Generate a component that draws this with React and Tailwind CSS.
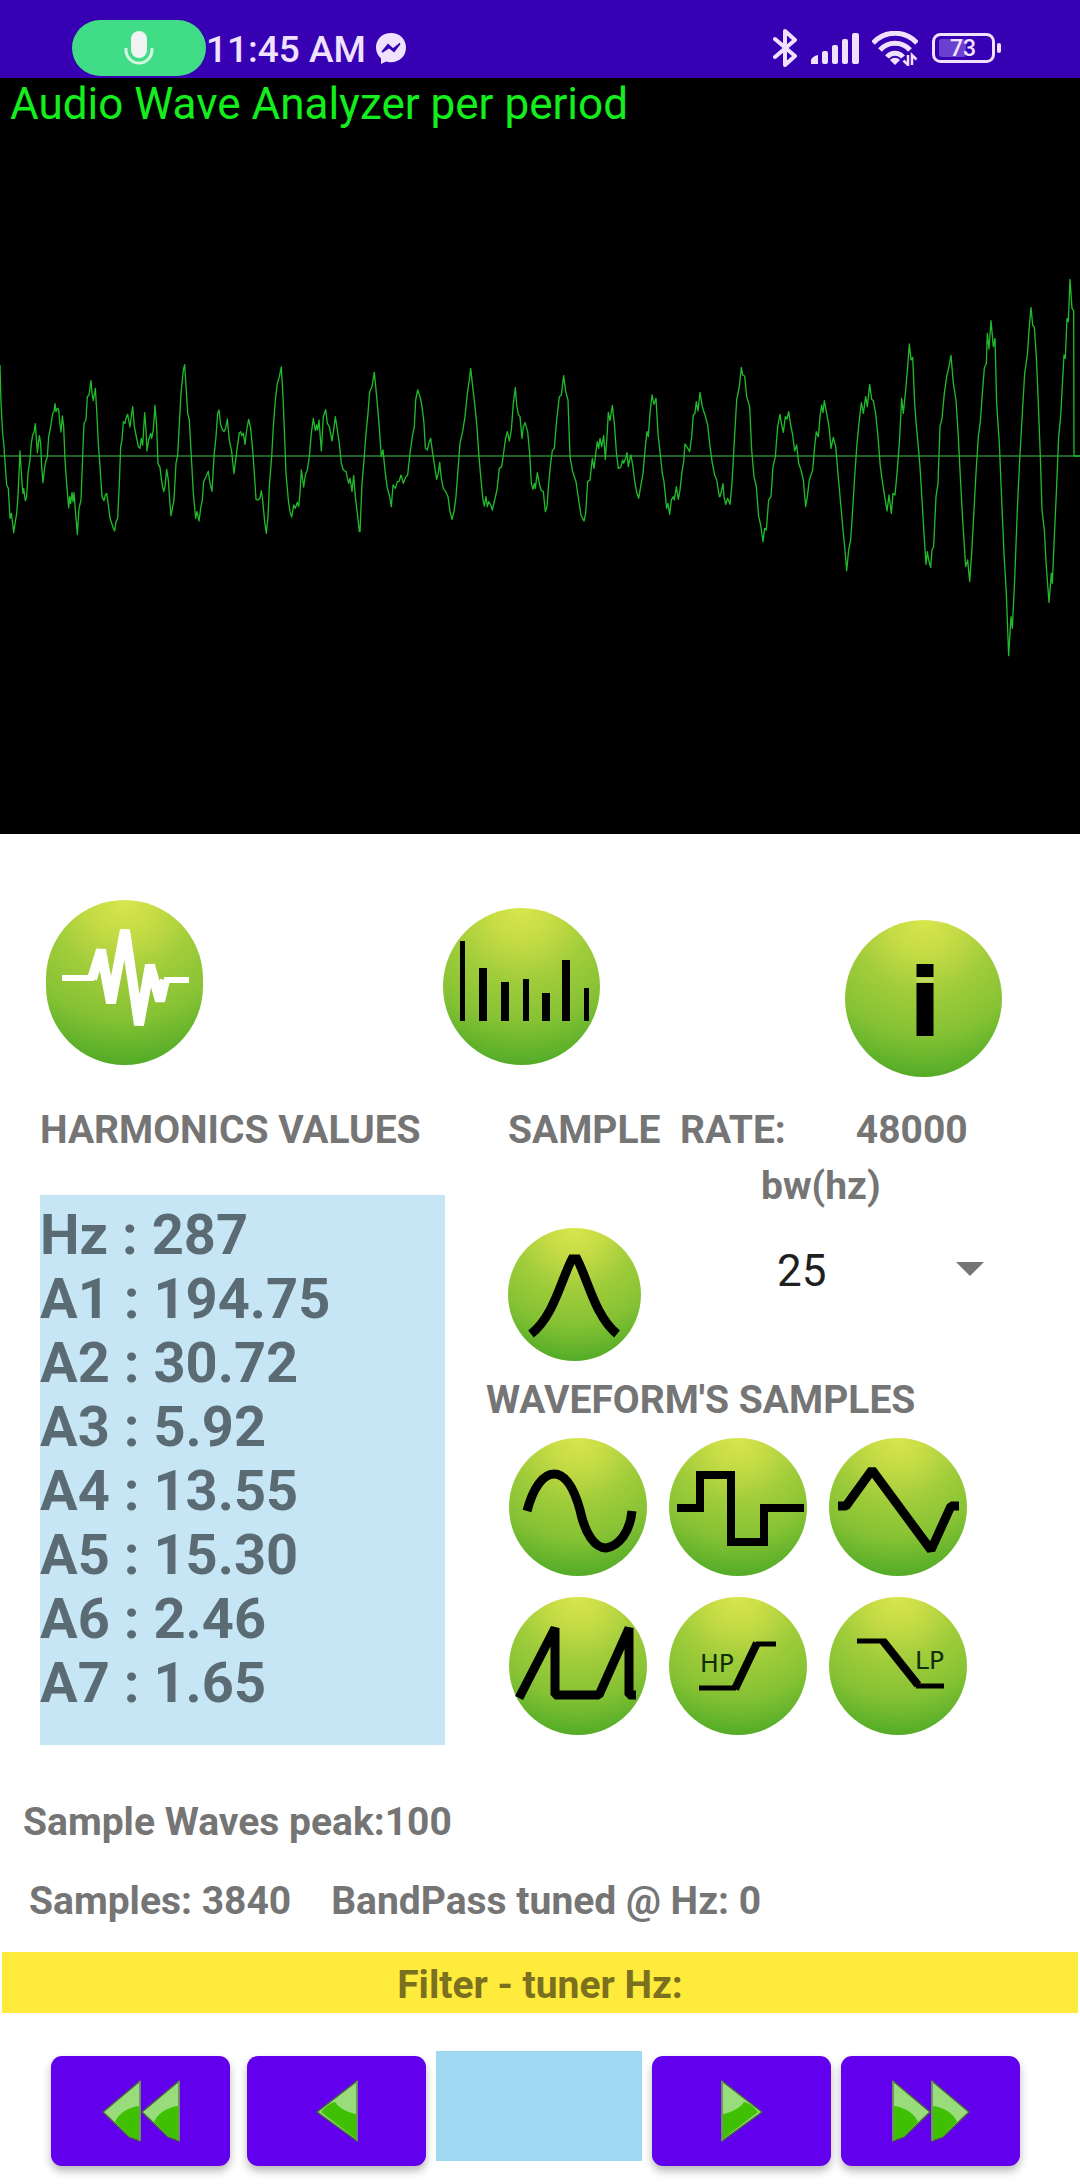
import { useState } from "react";

// Captured samples, drawn on a 3240 unit wide trace. 558 is the zero line.
const TRACE =
  "0,285 3,400 8,490 12,530 16,590 20,645 25,655 30,745 34,730 38,760 41,788 46,755 50,730 54,680 60,543 66,640 69,670 71,655 76,692 80,680 84,610 90,570 94,520 98,495 102,487 106,461 112,548 118,497 122,520 125,590 129,638 133,600 137,575 142,560 146,500 152,470 158,430 162,425 165,401 168,425 172,415 176,418 179,455 183,486 187,438 191,470 195,570 200,640 206,714 209,680 212,700 216,668 219,695 222,668 226,720 232,793 237,715 243,690 248,560 252,460 258,450 262,380 267,375 273,332 276,370 280,392 286,355 290,420 295,520 300,590 306,680 312,692 316,675 320,670 325,705 330,745 335,760 340,775 344,783 348,755 353,745 358,640 362,530 366,510 370,455 375,460 378,445 383,433 390,471 395,430 398,410 403,470 408,495 415,530 420,535 424,505 428,525 434,428 438,480 441,543 446,510 452,490 455,505 460,480 465,406 470,470 474,580 480,592 485,635 491,665 495,650 500,598 505,630 509,690 513,737 518,710 522,690 528,580 533,555 537,480 543,370 550,300 554,284 560,380 563,430 568,450 574,560 580,670 587,745 591,725 597,753 602,715 607,690 611,635 618,620 625,604 630,640 636,664 642,560 648,500 653,430 657,420 662,465 668,480 672,485 677,475 682,447 688,510 695,545 702,611 707,570 712,530 718,488 722,485 725,497 730,490 735,523 740,480 746,448 752,475 758,540 763,610 768,688 774,690 780,685 784,662 788,690 794,755 799,790 804,740 808,650 815,560 820,470 826,390 832,340 838,320 844,291 849,380 853,480 858,610 865,690 870,725 875,741 881,705 886,715 892,697 896,710 900,670 904,600 911,651 916,615 922,600 928,560 934,490 940,445 946,482 950,465 953,480 957,450 964,543 970,440 977,419 982,460 988,470 996,513 1001,480 1006,440 1012,480 1018,520 1024,580 1030,600 1038,605 1046,640 1050,625 1056,664 1061,617 1066,680 1072,730 1078,785 " +
  "1080,785 1086,640 1092,570 1098,490 1104,430 1109,365 1116,350 1123,307 1130,380 1137,460 1144,560 1149,540 1156,610 1162,655 1168,675 1174,710 1179,645 1186,655 1192,635 1197,635 1203,615 1210,640 1217,622 1223,615 1230,550 1237,500 1243,470 1247,390 1253,360 1260,380 1266,410 1272,460 1276,535 1282,540 1288,515 1292,505 1298,550 1304,590 1310,628 1315,610 1319,577 1324,625 1330,655 1337,665 1344,680 1350,725 1356,748 1362,725 1368,680 1374,600 1380,520 1388,485 1395,440 1402,370 1408,330 1412,295 1418,350 1424,400 1430,460 1437,560 1443,630 1449,690 1453,708 1458,680 1462,710 1466,695 1472,705 1477,720 1484,690 1491,660 1498,595 1505,590 1510,555 1516,510 1522,485 1528,513 1534,480 1540,400 1546,353 1550,405 1555,433 1560,440 1566,505 1570,470 1575,458 1583,485 1589,550 1594,640 1599,658 1603,640 1606,655 1612,608 1618,640 1623,660 1630,665 1636,725 1641,710 1646,640 1652,580 1657,542 1663,535 1670,450 1678,380 1684,375 1691,317 1697,365 1704,390 1710,560 1718,605 1728,635 1736,690 1743,735 1752,753 1757,730 1763,635 1770,630 1777,565 1782,595 1788,545 1792,515 1796,535 1800,505 1805,530 1811,497 1816,568 1821,500 1825,427 1830,452 1837,406 1843,460 1849,545 1855,595 1862,592 1868,570 1871,580 1877,565 1881,548 1885,590 1889,570 1893,555 1898,585 1905,640 1911,670 1916,685 1922,650 1929,610 1936,530 1941,485 1945,500 1950,430 1956,375 1962,403 1968,385 1974,490 1980,545 1987,610 1992,635 2000,715 2004,700 2009,733 2014,690 2020,680 2023,690 2029,650 2035,688 2040,660 2046,605 2051,575 2055,522 2062,533 2069,545 2075,500 2080,435 2085,430 2089,395 2094,423 2100,367 2107,410 2115,435 2123,465 2130,530 2137,580 2144,615 2150,630 2158,680 " +
  "2160,680 2165,660 2169,641 2172,680 2177,703 2183,685 2190,703 2196,640 2202,530 2210,390 2218,350 2224,292 2228,315 2234,318 2240,380 2249,410 2255,540 2262,620 2269,650 2276,740 2282,765 2289,815 2294,775 2299,780 2306,690 2313,680 2319,590 2326,560 2333,470 2340,433 2345,465 2350,487 2356,440 2361,447 2366,425 2372,465 2378,495 2384,543 2390,525 2396,580 2403,600 2410,630 2417,710 2422,680 2428,630 2438,600 2444,530 2449,485 2455,500 2460,440 2465,405 2469,428 2473,392 2480,430 2487,470 2493,535 2500,502 2507,530 2514,610 2521,690 2529,780 2535,840 2540,902 2546,840 2552,810 2558,720 2564,620 2571,520 2578,450 2584,398 2590,430 2597,380 2602,410 2609,343 2615,388 2620,392 2627,430 2634,500 2641,590 2648,640 2654,680 2661,723 2667,675 2674,730 2679,670 2685,675 2691,610 2698,520 2705,385 2710,430 2717,360 2723,290 2728,222 2733,270 2738,262 2744,400 2748,455 2754,520 2760,590 2766,690 2772,790 2778,883 2782,845 2786,870 2792,892 2796,840 2801,830 2808,680 2814,640 2820,470 2826,445 2833,370 2840,320 2847,290 2853,256 2860,340 2868,390 2875,500 2881,620 2888,750 2897,890 2903,870 2909,935 2915,850 2922,720 2928,610 2935,500 2941,455 2947,370 2953,295 2959,280 2962,190 2967,237 2973,152 2980,230 2985,205 2990,400 2998,520 3005,690 3012,850 3019,970 3026,1157 3033,1040 3037,1075 3044,930 3052,720 3059,570 3067,430 3074,310 3082,255 3088,170 3093,112 3098,165 3103,172 3109,260 3115,400 3121,560 3126,720 3133,780 3139,890 3147,997 3154,910 3157,940 3163,800 3169,670 3176,500 3182,440 3189,310 3192,255 3196,265 3201,145 3205,155 3210,28 3216,115 3221,122 3222,558 3240,558";

const HARMONICS = [
  ["Hz", "287"],
  ["A1", "194.75"],
  ["A2", "30.72"],
  ["A3", "5.92"],
  ["A4", "13.55"],
  ["A5", "15.30"],
  ["A6", "2.46"],
  ["A7", "1.65"],
];

const SPECTRUM = [
  [17, 5, 33],
  [36, 8, 60],
  [58, 8, 74],
  [80, 6, 71],
  [99, 8, 85],
  [119, 8, 52],
  [141, 5, 80],
];

const WAVEFORMS = [
  {
    label: "Sine",
    art: <path strokeWidth="9" d="M18 73C24 50 34 36 45 36C58 36 66 54 71 72C76 96 86 110 97 110C110 108 121 94 123 73" />,
  },
  { label: "Square", art: <path strokeWidth="8" d="M8 70H31V37H62V104H95V70H135" /> },
  { label: "Triangle", art: <path strokeWidth="9" strokeLinejoin="bevel" d="M9 68H17L43 32L102 112L122 68H130" /> },
  {
    label: "Sawtooth",
    art: <path strokeWidth="9" strokeLinejoin="bevel" d="M10 101L46 31V98H90L120 31V98H127" />,
  },
  {
    label: "High pass",
    art: (
      <>
        <path strokeWidth="5" d="M30 91H67M87 47H107" />
        <path strokeWidth="8" d="M66 92L88 46" />
        <text x="31" y="75" fontSize="25" fill="#10300a" stroke="none" className="font-['DejaVu_Sans',sans-serif] font-normal">
          HP
        </text>
      </>
    ),
  },
  {
    label: "Low pass",
    art: (
      <>
        <path strokeWidth="5" d="M28 44H57M87 89H115" />
        <path strokeWidth="8" d="M54 44L89 88" />
        <text x="86" y="72" fontSize="25" fill="#10300a" stroke="none" className="font-['DejaVu_Sans',sans-serif] font-normal">
          LP
        </text>
      </>
    ),
  },
];

function Disc({ label, size, box, children }) {
  return (
    <button
      type="button"
      aria-label={label}
      className={`${size} block shrink-0 rounded-full bg-[radial-gradient(circle_at_50%_0%,#d8e64c_0%,#c4db45_20%,#a0cc3a_42%,#86c234_65%,#5cb02a_85%,#43a01f_100%)]`}
    >
      <svg viewBox={box} fill="none" stroke="#000" className="block h-full w-full overflow-visible">
        {children}
      </svg>
    </button>
  );
}

function StatusBar() {
  return (
    <header className="flex h-[78px] items-end justify-between bg-[#3700b3] pr-[78px] pl-[72px] text-[#f0e2ff]">
      <div className="flex items-center pb-[2px]">
        <span className="flex h-14 w-[134px] items-center justify-center rounded-full bg-[#40dc86]">
          <svg viewBox="0 0 30 34" className="h-[34px] w-[30px]" fill="none">
            <rect x="7" y="0" width="16" height="27" rx="8" fill="#f2f4f4" />
            <path d="M2 17V19A13 13 0 0 0 28 19V17" stroke="#d5f7e2" strokeWidth="3" />
          </svg>
        </span>
        <span className="pt-1 text-[37px] leading-[42px] font-medium">11:45 AM</span>
        <svg viewBox="0 0 30 31" className="ml-[10px] h-[31px] w-[30px]">
          <path d="M15 0C6.500 0 0 6 0 14.500C0 19 2 23 5 25.500V31L10 28.500C11.500 29 13 29.200 15 29.200C23.500 29.200 30 23 30 14.500C30 6 23.500 0 15 0Z" fill="#f0e2ff" />
          <path d="M6 19L12 11.500L17 16L24 10.500L18 18.500L13 14.500Z" fill="#3700b3" stroke="#3700b3" strokeWidth="1.500" />
        </svg>
      </div>
      <div className="flex h-[60px] items-center">
        <svg viewBox="0 0 24 38" className="h-[38px] w-6" fill="none" stroke="#f0e2ff" strokeWidth="4" strokeLinejoin="round" strokeLinecap="round">
          <path d="M2 10L22 27L12 36V2L22 11L2 28" />
        </svg>
        <svg viewBox="0 0 48 31" className="ml-[14px] h-[31px] w-12" fill="#f0e2ff">
          <path d="M0 27C0 25 5 22 7 22V31H0Z" />
          <rect x="11" y="18" width="6" height="13" rx="2" />
          <rect x="21" y="12" width="6" height="19" rx="2" />
          <rect x="31" y="6" width="6" height="25" rx="2" />
          <rect x="41" y="0" width="7" height="31" rx="2" />
        </svg>
        <svg viewBox="0 0 46 35" className="ml-[13px] h-[35px] w-[46px]" fill="none" stroke="#f0e2ff" strokeWidth="5">
          <path d="M1 12C13 -1 33 -1 45 12M8 19C16 10 30 10 38 19M15 26C19 21 27 21 31 26" />
          <path d="M23 34L18 29C21 26 25 26 28 29Z" fill="#f0e2ff" stroke="none" />
          <path d="M36 24V34L31.500 29.500M40 34V24L44.500 28.500" strokeWidth="2.500" />
        </svg>
        <svg viewBox="0 0 70 30" className="ml-[14px] h-[30px] w-[70px]">
          <rect x="7" y="6" width="27" height="18" rx="3" fill="#6b3fcf" />
          <rect x="1.500" y="1.500" width="60" height="27" rx="7" fill="none" stroke="#f0e2ff" strokeWidth="3" />
          <rect x="65" y="10" width="4" height="10" rx="2" fill="#f0e2ff" />
          <text x="31" y="23" fontSize="23" textAnchor="middle" fill="#f0e2ff" className="font-medium">
            73
          </text>
        </svg>
      </div>
    </header>
  );
}

// One glossy green triangle pointing left; the right hand buttons mirror it.
function Arrow({ flip, double }) {
  const width = double ? 78 : 42;
  return (
    <svg
      viewBox={`0 0 ${width} 62`}
      className={`mx-auto h-[62px] ${double ? "w-[78px]" : "w-[42px]"} ${flip ? "-scale-x-100" : ""}`}
    >
      {(double ? [0, 39] : [0]).map((x) => (
        <g key={x} transform={`translate(${x} 0)`}>
          <path d={double ? "M1 32L38 1V61L27 57Z" : "M1 32L41 1V61Z"} fill="#98dc7c" stroke="#47633f" strokeWidth="1.500" />
          <path d={double ? "M13 42C17 33 27 27 37 26V60L27 56Z" : "M5 32C9 27 14 23 19 22C23 28 31 32 40 34V59Z"} fill="#3fc002" />
          <path d={double ? "M38 1V61" : "M41 1V61"} stroke="#7c9c72" strokeWidth="1.500" />
        </g>
      ))}
    </svg>
  );
}

function TuneButton({ label, flip, double, className = "" }) {
  return (
    <button
      type="button"
      aria-label={label}
      className={`mt-[5px] h-[110px] flex-[179] rounded-[11px] bg-[#6200ee] shadow-[0_5px_8px_rgba(0,0,0,0.28)] ${className}`}
    >
      <Arrow flip={flip} double={double} />
    </button>
  );
}

export default function App() {
  const [bw, setBw] = useState("25");

  return (
    <div className="min-h-screen bg-white pb-[18px] font-['Roboto',sans-serif] text-[39px] leading-[44px] font-bold text-[#757575]">
      <StatusBar />

      <section className="bg-black">
        <h1 className="pl-[10px] text-[44px] leading-[52px] font-normal text-[#14ee1c]">Audio Wave Analyzer per period</h1>
        <svg viewBox="0 -420 3240 2112" className="block w-full" fill="none" role="img" aria-label="Audio wave">
          <path d="M0 558H3240" stroke="#2f8236" strokeWidth="5" />
          <polyline points={TRACE} stroke="#20ba2a" strokeWidth="4" strokeLinejoin="round" />
        </svg>
      </section>

      <main>
        <div className="flex items-start justify-between pt-[66px] pr-[78px] pl-[46px]">
          <Disc label="Wave view" size="h-[165px] w-[157px]" box="0 0 157 165">
            <path stroke="#fff" strokeWidth="6" d="M16 78H48M118 80H143" />
            <path stroke="#fff" strokeWidth="10" strokeLinejoin="bevel" d="M46 79L55 50L65 103L79 30L93 125L104 65L114 101L119 80" />
          </Disc>
          <div className="pt-2 pr-[5px]">
            <Disc label="Spectrum view" size="h-[157px] w-[157px]" box="0 0 157 157">
              {SPECTRUM.map(([x, w, y]) => (
                <rect key={x} x={x} y={y} width={w} height={113 - y} fill="#000" stroke="none" />
              ))}
            </Disc>
          </div>
          <div className="pt-5">
            <Disc label="Info" size="h-[157px] w-[157px]" box="0 0 157 157">
              <path d="M80 44V57M80 63V116" strokeWidth="17" />
              <path d="M80 58V62" strokeWidth="17" stroke="#c3d864" />
            </Disc>
          </div>
        </div>

        <div className="mt-[31px] flex">
          <div className="w-[45%] pr-[41px] pl-10">
            <h2>HARMONICS VALUES</h2>
            <ul className="mt-[43px] bg-[#c7e6f5] pt-2 pb-[30px] text-[56px] leading-[64px] text-[#5b6b74]">
              {HARMONICS.map(([name, value]) => (
                <li key={name}>
                  {name} : {value}
                </li>
              ))}
            </ul>
          </div>

          <div className="flex-1">
            <p className="flex gap-[70px] pl-[22px]">
              <span className="whitespace-pre">SAMPLE  RATE:</span>
              <span>48000</span>
            </p>

            <div className="mt-3 flex items-start pl-[22px]">
              <div className="pt-16">
                <Disc label="Band pass" size="h-[133px] w-[133px]" box="0 0 133 133">
                  <path strokeWidth="9" d="M23 106C46 88 53 52 64 31H69C80 52 87 88 109 106" />
                </Disc>
              </div>
              <div className="ml-[120px] flex-1 pr-24">
                <label htmlFor="bw">bw(hz)</label>
                <div className="relative mt-[37px]">
                  <select
                    id="bw"
                    value={bw}
                    onChange={(e) => setBw(e.target.value)}
                    className="block w-full appearance-none bg-transparent pl-4 text-[44px] leading-[52px] font-normal text-[#1f1f1f]"
                  >
                    <option>10</option>
                    <option>25</option>
                    <option>50</option>
                    <option>100</option>
                  </select>
                  <svg viewBox="0 0 28 14" className="pointer-events-none absolute top-[17px] right-0 h-[14px] w-7">
                    <path d="M0 0H28L14 14Z" fill="#757575" />
                  </svg>
                </div>
              </div>
            </div>

            <h2 className="mt-[17px]">WAVEFORM'S SAMPLES</h2>
            <div className="mt-4 grid w-fit grid-cols-3 gap-x-[22px] gap-y-[21px] pl-[23px]">
              {WAVEFORMS.map((w) => (
                <Disc key={w.label} label={w.label} size="h-[138px] w-[138px]" box="0 0 138 138">
                  {w.art}
                </Disc>
              ))}
            </div>
          </div>
        </div>

        <p className="mt-[55px] pl-[23px]">Sample Waves peak:100</p>
        <p className="mt-[35px] flex gap-10 pl-[29px]">
          <span>Samples: 3840</span>
          <span>BandPass tuned @ Hz: 0</span>
        </p>

        <h2 className="mx-[2px] mt-[29px] bg-[#ffeb3b] pt-[11px] pb-[6px] text-center text-[#7a7020]">Filter - tuner Hz:</h2>

        <div className="mt-[38px] flex items-start gap-[10px] pr-[60px] pl-[51px]">
          <TuneButton label="Fast down" double className="mr-[7px]" />
          <TuneButton label="Down" />
          <output className="h-[110px] flex-[206] bg-[#9fd8f1]" aria-label="Tuned frequency" />
          <TuneButton label="Up" flip />
          <TuneButton label="Fast up" flip double />
        </div>
      </main>
    </div>
  );
}
